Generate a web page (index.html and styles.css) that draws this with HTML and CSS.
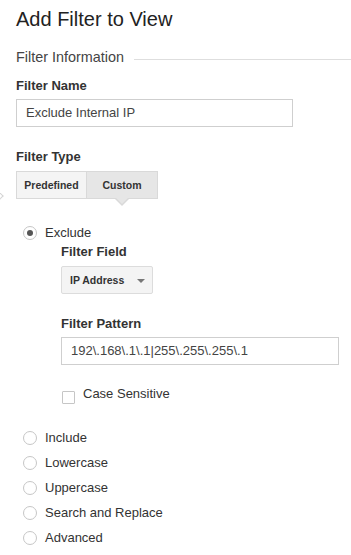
FILE: index.html
```html
<!DOCTYPE html>
<html>
<head>
<meta charset="utf-8">
<link rel="stylesheet" href="styles.css">
</head>
<body>
<div class="page">
  <h1 class="title">Add Filter to View</h1>
  <div class="section-head"><span class="section-title">Filter Information</span><span class="rule"></span></div>

  <div class="label label-name">Filter Name</div>
  <div class="input input-name">Exclude Internal IP</div>

  <div class="label label-type">Filter Type</div>
  <div class="seg">
    <span class="side-pointer"></span>
    <span class="seg-btn">Predefined</span>
    <span class="seg-btn active">Custom</span>
  </div>

  <div class="options">
    <div class="option first"><span class="radio on"></span><span>Exclude</span></div>
    <div class="sub">
      <div class="label label-field">Filter Field</div>
      <div class="select">IP Address<span class="caret"></span></div>
      <div class="label label-pattern">Filter Pattern</div>
      <div class="input input-pattern">192\.168\.1\.1|255\.255\.255\.1</div>
      <div class="check-row"><span class="checkbox"></span><span>Case Sensitive</span></div>
    </div>
    <div class="option gap"><span class="radio"></span><span>Include</span></div>
    <div class="option"><span class="radio"></span><span>Lowercase</span></div>
    <div class="option"><span class="radio"></span><span>Uppercase</span></div>
    <div class="option"><span class="radio"></span><span>Search and Replace</span></div>
    <div class="option"><span class="radio"></span><span>Advanced</span></div>
  </div>
</div>
</body>
</html>
```
FILE: styles.css
```css
* { box-sizing: border-box; }
html, body { margin: 0; padding: 0; background: #fff; }
body {
  font-family: "Liberation Sans", Arial, sans-serif;
  color: #333;
  font-size: 13px;
}
.page {
  padding: 7px 0 0 16px;
  width: 351px;
  height: 555px;
  overflow: hidden;
}
.title {
  margin: 0;
  font-size: 20px;
  line-height: 24px;
  font-weight: normal;
  color: #222;
}
.section-head {
  margin-top: 17px;
  display: flex;
  align-items: flex-start;
  font-size: 14.4px;
  line-height: 18px;
  color: #444;
}
.rule {
  flex: 1;
  height: 1px;
  background: #dedede;
  margin: 11px 0 0 10px;
}
.label {
  font-weight: bold;
  font-size: 13px;
  line-height: 16px;
  color: #333;
}
.label-name { margin-top: 12px; }
.label-type { margin-top: 22px; }
.input {
  height: 28px;
  border: 1px solid #cfcfcf;
  background: #fff;
  padding: 0 9px;
  line-height: 26px;
  font-size: 13px;
  color: #444;
  white-space: nowrap;
}
.input-name { margin-top: 5px; width: 277px; }
.seg {
  position: relative;
  margin-top: 6px;
  display: flex;
  height: 28px;
}
.side-pointer {
  position: absolute;
  left: -22px;
  top: 21px;
  width: 8px;
  height: 8px;
  border-top: 1px solid #d4d4d4;
  border-right: 1px solid #d4d4d4;
  transform: rotate(45deg);
}
.seg-btn {
  position: relative;
  width: 71px;
  height: 28px;
  border: 1px solid #d9d9d9;
  background: #f4f4f4;
  font-weight: bold;
  font-size: 10.5px;
  line-height: 26px;
  text-align: center;
  color: #333;
}
.seg-btn + .seg-btn { border-left: none; }
.seg-btn.active { background: #e6e6e6; }
.seg-btn.active::before {
  content: "";
  position: absolute;
  left: 50%;
  margin-left: -7px;
  top: 27px;
  border-left: 7px solid transparent;
  border-right: 7px solid transparent;
  border-top: 7px solid #d9d9d9;
}
.seg-btn.active::after {
  content: "";
  position: absolute;
  left: 50%;
  margin-left: -6px;
  top: 26px;
  border-left: 6px solid transparent;
  border-right: 6px solid transparent;
  border-top: 6px solid #e6e6e6;
}
.options {
  margin-top: 21px;
  padding-left: 7px;
}
.option {
  display: flex;
  align-items: center;
  height: 25px;
  line-height: 25px;
  font-size: 13px;
  color: #333;
}
.option.gap { margin-top: 21px; }
.radio {
  width: 14px;
  height: 14px;
  border: 1px solid #c6c6c6;
  border-radius: 50%;
  margin-right: 8px;
  background: #fff;
  display: flex;
  align-items: center;
  justify-content: center;
  flex: none;
}
.radio.on::after {
  content: "";
  width: 6px;
  height: 6px;
  border-radius: 50%;
  background: #555;
}
.sub {
  padding-left: 38px;
}
.label-field { line-height: 14px; }
.select {
  position: relative;
  margin-top: 7px;
  width: 92px;
  height: 28px;
  border: 1px solid #dcdcdc;
  border-radius: 2px;
  background: #f4f4f4;
  padding-left: 8px;
  font-weight: bold;
  font-size: 10.5px;
  line-height: 26px;
  color: #333;
}
.caret {
  position: absolute;
  right: 7px;
  top: 12px;
  border-left: 4px solid transparent;
  border-right: 4px solid transparent;
  border-top: 4px solid #777;
}
.label-pattern { margin-top: 22px; }
.input-pattern { margin-top: 5px; width: 278px; }
.check-row {
  margin-top: 21px;
  display: flex;
  align-items: flex-start;
  line-height: 16px;
  font-size: 13px;
  color: #333;
}
.checkbox {
  width: 13px;
  height: 13px;
  border: 1px solid #c6c6c6;
  border-radius: 1px;
  margin: 5px 8px 0 1px;
  flex: none;
}
```
